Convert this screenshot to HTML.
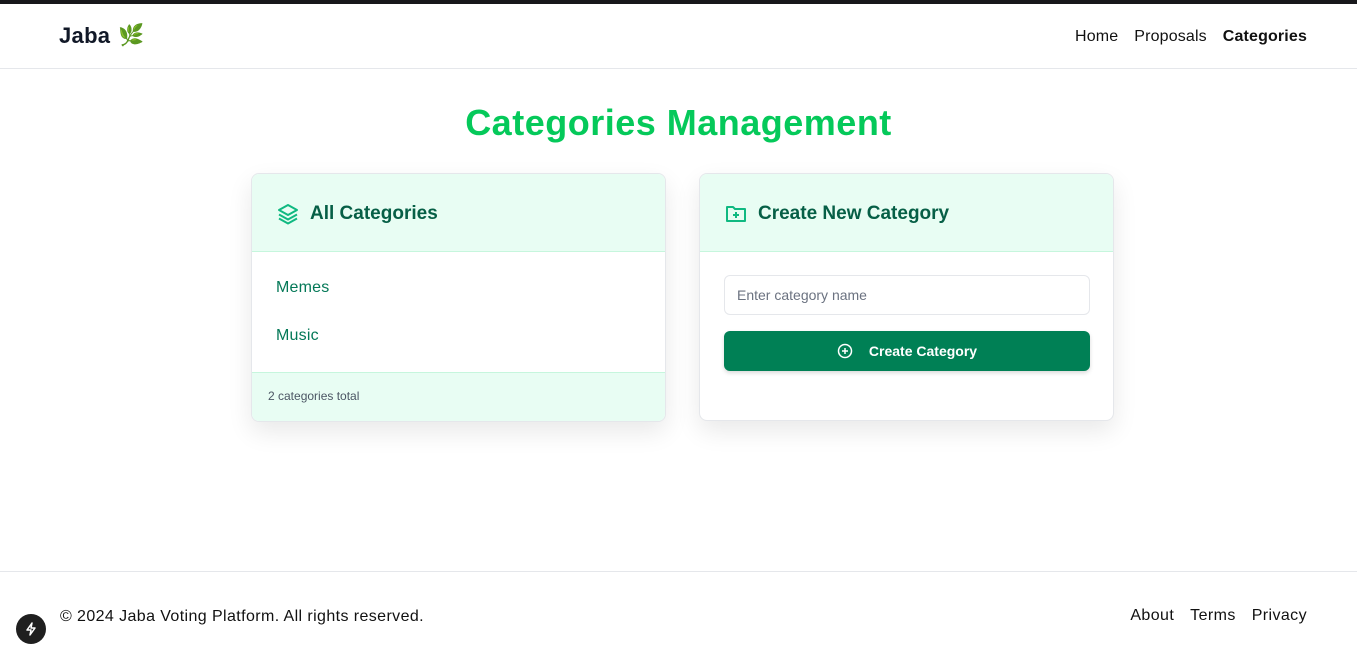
<!DOCTYPE html>
<html><head><meta charset="utf-8"><style>
*{box-sizing:border-box;margin:0;padding:0}
body{width:1357px;height:660px;overflow:hidden;font-family:"Liberation Sans",sans-serif;background:#fff;position:relative;color:#111}
.top{height:4px;background:#18181b}
header{height:65px;border-bottom:1px solid #e5e7eb;display:flex;align-items:center;justify-content:space-between;padding:0 50px 0 59px}
.logo{font-size:22px;font-weight:bold;color:#111827;display:flex;align-items:center;gap:8px;letter-spacing:.3px}
nav{margin-top:2px}
nav a{font-size:16px;color:#111;margin-left:16px;text-decoration:none;letter-spacing:.15px}
nav a.b{font-weight:bold}
h1{text-align:center;font-size:36px;font-weight:bold;margin-top:33px;height:40px;color:#05c95a;letter-spacing:.5px}
.card{position:absolute;top:173px;width:415px;border:1px solid #e5e7eb;border-radius:8px;background:#fff;box-shadow:0 10px 25px rgba(0,0,0,.09);overflow:hidden}
.ch{height:78px;background:#e8fdf3;border-bottom:1px solid #c6f6dd;display:flex;align-items:center;padding-left:24px;gap:10px;font-size:19px;font-weight:bold;color:#065f46;padding-top:2px}
.item{font-size:16px;color:#047857;padding-left:24px;height:48px;line-height:48px;letter-spacing:.2px}
.foot{height:49px;background:#e8fdf3;border-top:1px solid #c6f6dd;font-size:12px;color:#4b5563;padding-left:16px;line-height:47px}
input{display:block;margin:23px 0 0 24px;width:366px;height:40px;border:1px solid #e5e7eb;border-radius:6px;padding-left:12px;font-size:14px;font-family:inherit}
input::placeholder{color:#6b7280}
.btn{margin:16px 0 49px 24px;width:366px;height:40px;border-radius:6px;background:#008055;color:#fff;font-size:14px;font-weight:bold;display:flex;align-items:center;justify-content:center;gap:16px;box-shadow:0 2px 4px rgba(0,0,0,.15)}
footer{position:absolute;top:571px;left:0;right:0;height:89px;border-top:1px solid #e5e7eb;display:flex;align-items:center;justify-content:space-between;padding:0 50px 0 60px;font-size:16px;letter-spacing:.4px}
footer>div{margin-top:2px}
footer span a{margin-left:16px;color:#111}
.n{position:absolute;left:16px;top:614px;width:30px;height:30px;border-radius:50%;background:#1f1f1f;display:flex;align-items:center;justify-content:center}
</style></head><body>
<div class="top"></div>
<header><div class="logo">Jaba <span style="font-size:21px">🌿</span></div>
<nav><a>Home</a><a>Proposals</a><a class="b">Categories</a></nav></header>
<h1>Categories Management</h1>
<div class="card" style="left:251px">
<div class="ch"><svg width="24" height="24" viewBox="0 0 24 24" fill="none" stroke="#10b981" stroke-width="2" stroke-linejoin="round"><path d="M12 3l9 5-9 5-9-5z"/><path d="M3 12.5l9 5 9-5"/><path d="M3 16.5l9 5 9-5"/></svg>All Categories</div>
<div style="padding:12px 0"><div class="item">Memes</div><div class="item">Music</div></div>
<div class="foot">2 categories total</div></div>
<div class="card" style="left:699px">
<div class="ch"><svg width="24" height="24" viewBox="0 0 24 24" fill="none" stroke="#10b981" stroke-width="2" stroke-linejoin="round"><path d="M3 5h6l2 2h10v12H3z"/><path d="M12 10v6M9 13h6"/></svg>Create New Category</div>
<input placeholder="Enter category name">
<div class="btn"><svg width="16" height="16" viewBox="0 0 16 16" fill="none" stroke="#fff" stroke-width="1.5"><circle cx="8" cy="8" r="6.5"/><path d="M8 5v6M5 8h6"/></svg>Create Category</div></div>
<footer><div>© 2024 Jaba Voting Platform. All rights reserved.</div><span><a>About</a><a>Terms</a><a>Privacy</a></span></footer>
<div class="n"><svg width="16" height="16" viewBox="0 0 16 16" fill="none" stroke="#fff" stroke-width="1.5" stroke-linejoin="round"><path d="M9 2L4 9h4l-1 5 5-7H8z"/></svg></div>
</body></html>
